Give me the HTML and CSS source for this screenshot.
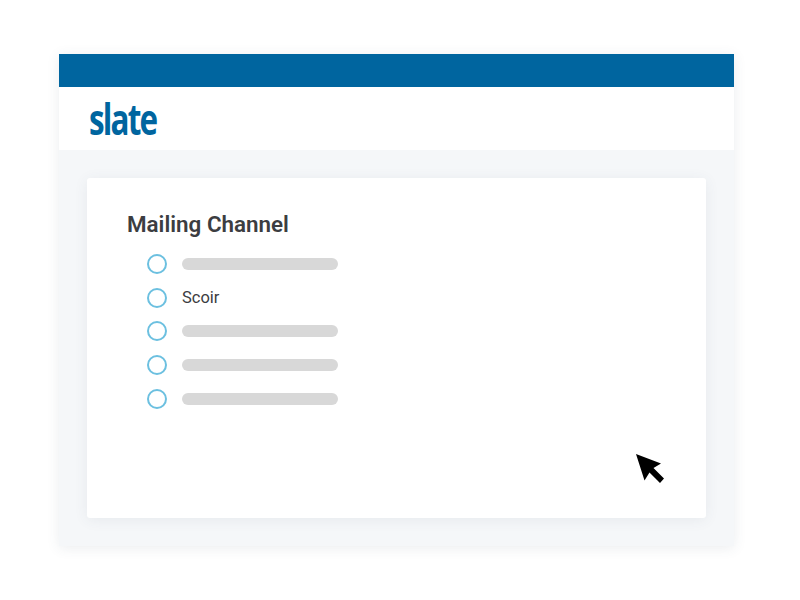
FILE: index.html
```html
<!DOCTYPE html>
<html>
	<head>
		<meta charset="utf-8" />
		<title>Mailing Channel</title>
		<link rel="stylesheet" href="styles.css">
	</head>
	<body>
		<main class="window">
			<div class="top-bar"></div>
			<header class="brand-bar">
				<span class="logo">slate</span>
			</header>
			<div class="content">
				<section class="card">
					<h1>Mailing Channel</h1>
					<ul class="options">
						<li><span class="radio"></span><span class="placeholder"></span></li>
						<li><span class="radio"></span><span class="label">Scoir</span></li>
						<li><span class="radio"></span><span class="placeholder"></span></li>
						<li><span class="radio"></span><span class="placeholder"></span></li>
						<li><span class="radio"></span><span class="placeholder"></span></li>
					</ul>
					<svg class="cursor" width="30" height="32" viewBox="0 0 30 32">
						<path d="M1 1 L26 10.5 L18.5 15 L29 25.5 L25 30 L14.5 19.5 L9.5 27.5 Z" fill="#000" />
					</svg>
				</section>
			</div>
		</main>
	</body>
</html>
```

FILE: styles.css
```css
* {
	padding: 0;
	margin: 0;
	box-sizing: border-box;
}

body {
	width: 800px;
	height: 600px;
	padding: 54px 66px 54px 59px;
	background: #fff;
	font-family: 'Roboto', sans-serif;
	overflow: hidden;
}

.window {
	height: 492px;
	display: flex;
	flex-direction: column;
	background: #f5f7f9;
	box-shadow: 0 2px 12px rgba(60, 80, 100, 0.1);
}

.top-bar {
	height: 33px;
	background: #00659f;
}

.brand-bar {
	height: 63px;
	padding: 7px 0 0 30px;
	background: #fff;
}

.logo {
	display: inline-block;
	font-family: 'Open Sans', sans-serif;
	font-size: 43px;
	line-height: 50px;
	font-weight: 700;
	letter-spacing: -2.5px;
	color: #00659f;
	transform: scaleX(0.73);
	transform-origin: left center;
}

.content {
	flex: 1;
	padding: 28px;
}

.card {
	position: relative;
	height: 340px;
	padding: 33px 40px;
	background: #fff;
	border-radius: 3px;
	box-shadow: 0 2px 14px rgba(60, 80, 100, 0.08);
}

h1 {
	font-size: 22.4px;
	line-height: 26px;
	font-weight: 600;
	color: #3c3d41;
}

.options {
	list-style: none;
	margin-top: 10px;
	padding-left: 20px;
}

.options li {
	display: flex;
	align-items: center;
	gap: 15px;
	height: 33.75px;
}

.radio {
	width: 20px;
	height: 20px;
	border: 2px solid #6cc0e0;
	border-radius: 50%;
}

.placeholder {
	width: 156px;
	height: 12px;
	background: #d8d8d8;
	border-radius: 6px;
}

.label {
	font-size: 16.5px;
	color: #3c3d41;
}

.cursor {
	position: absolute;
	left: 548px;
	top: 275px;
}
```
